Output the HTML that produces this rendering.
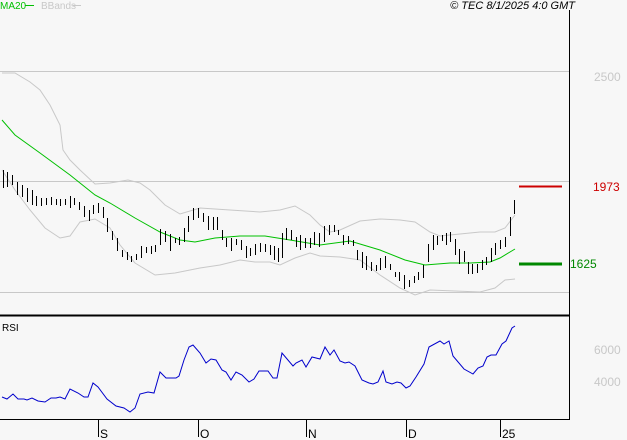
<!DOCTYPE html>
<html><head><meta charset="utf-8"><style>
html,body{margin:0;padding:0;background:#f7f7f7;}
body{width:627px;height:440px;overflow:hidden;position:relative;font-family:"Liberation Sans",sans-serif;}
svg{position:absolute;left:0;top:0;}
</style></head><body>
<svg width="627" height="440" viewBox="0 0 627 440" xmlns="http://www.w3.org/2000/svg" font-family="Liberation Sans, sans-serif">
<rect width="627" height="440" fill="#f7f7f7"/>
<text x="0" y="9" font-size="10" fill="#00c000">MA20</text>
<line x1="25" y1="5.5" x2="34" y2="5.5" stroke="#00c000" stroke-width="1"/>
<text x="41" y="9" font-size="10" fill="#c8c8c8">BBands</text>
<line x1="73" y1="5.5" x2="81" y2="5.5" stroke="#c8c8c8"/>
<text x="575" y="9" font-size="11" font-style="italic" fill="#000" text-anchor="end">© TEC 8/1/2025 4:0 GMT</text>
<g stroke="#c8c8c8" stroke-width="1">
<line x1="0" y1="71.5" x2="569" y2="71.5"/>
<line x1="0" y1="181.5" x2="569" y2="181.5"/>
<line x1="0" y1="292.5" x2="569" y2="292.5"/>
</g>
<text x="594" y="81" font-size="12" fill="#c8c8c8">2500</text>
<polyline fill="none" stroke="#c8c8c8" stroke-width="1" points="2,73 15,73 30,82 40,90 50,105 60,125 63,150 70,160 80,170 95,184 110,183 128,180 140,183 150,190 165,205 180,214 200,208 230,210 260,212 280,210 295,206 310,215 320,225 330,232 340,230 360,221 380,219 400,220 415,222 430,232 440,236 460,234 480,232 495,232 505,228 515,215"/>
<polyline fill="none" stroke="#c8c8c8" stroke-width="1" points="2,170 15,190 30,210 45,228 60,238 70,236 80,222 95,219 110,228 120,245 135,263 155,275 175,273 200,268 220,265 240,260 255,262 270,262 280,265 295,258 310,253 320,256 340,257 360,260 380,275 400,288 415,295 430,290 480,292 495,288 505,280 515,279"/>
<polyline fill="none" stroke="#00c000" stroke-width="1" points="2,120 15,135 40,153 70,175 95,195 110,203 135,218 160,232 180,240 195,242 215,238 240,236 265,236 290,240 320,245 350,241 380,250 405,260 425,265 450,263 470,263 490,262 500,258 515,249"/>
<g transform="translate(0.5,0)">
<path fill="none" stroke="#000" stroke-width="1" shape-rendering="crispEdges" d="
M3 170V188M7 172V187M12 175V185M17 182V195M22 185V197M27 188V202M32 190V205M36 196V206M41 198V206M46 198V205M51 197V205M56 199V205M60 199V206M65 199V205M70 196V208M74 198V205M79 202V210M84 206V217M89 210V221M93 205V214M98 203V213M103 207V218M107 218V232M112 231V240M117 238V251M122 250V257M127 252V260M131 256V262M136 254V260M141 246V258M146 247V253M151 246V254M155 245V252M160 229V245M165 231V242M170 234V251M175 238V243M179 237V245M184 228V242M188 216V232M193 208V220M198 208V218M203 213V222M208 216V230M213 217V230M217 217V230M222 230V240M226 238V247M231 238V251M236 239V245M241 240V250M246 246V258M250 248V256M255 244V255M260 243V252M265 244V252M270 245V255M274 246V260M278 248V262M282 233V258M286 228V240M291 230V240M296 237V247M300 235V250M305 238V248M310 238V248M314 232V245M319 233V247M324 226V242M329 225V235M334 225V232M338 230V235M343 235V245M348 236V244M353 240V246M357 250V260M362 252V268M366 256V270M371 262V271M376 265V271M380 258V270M385 256V268M390 264V270M395 272V277M399 272V281M404 275V289M409 280V287M414 276V283M418 272V280M423 265V278M428 244V262M433 235V250M437 236V245M442 235V241M446 233V245M450 232V242M455 239V255M459 249V264M464 251V262M468 262V274M472 264V274M477 264V273M482 260V270M486 257V265M491 248V262M495 243V255M500 240V249M505 237V247M510 217V236M514 200V214"/>
</g>
<line x1="519" y1="186.5" x2="562" y2="186.5" stroke="#cc0000" stroke-width="2"/>
<line x1="519" y1="264" x2="562" y2="264" stroke="#008800" stroke-width="3"/>
<text x="593" y="191" font-size="12" fill="#cc0000">1973</text>
<text x="570" y="268" font-size="12" fill="#008800">1625</text>
<line x1="569.5" y1="10" x2="569.5" y2="420" stroke="#000" stroke-width="1"/>
<line x1="0" y1="315.5" x2="569" y2="315.5" stroke="#000" stroke-width="2"/>
<line x1="0" y1="419.5" x2="569" y2="419.5" stroke="#000" stroke-width="1"/>
<text x="2" y="331" font-size="10" fill="#000">RSI</text>
<text x="594" y="354" font-size="12" fill="#c8c8c8">6000</text>
<text x="594" y="386" font-size="12" fill="#c8c8c8">4000</text>
<polyline fill="none" stroke="#0000cc" stroke-width="1" points="2,397 7,399 13,394 18,399 24,399 27,400 32,398 38,401 45,402 51,398 56,398 60,397 65,399 70,389 78,393 84,397 88,397 93,383 98,387 107,399 116,406 124,408 130,412 135,408 140,394 148,392 154,393 160,372 166,378 176,378 179,376 184,360 189,347 193,345 200,353 206,363 211,359 216,360 222,370 226,372 231,380 236,372 242,375 249,382 254,379 259,371 268,371 273,378 277,378 282,353 293,366 296,363 302,360 306,367 312,357 320,359 325,347 330,355 334,350 340,361 345,363 349,362 355,366 362,380 369,383 373,384 378,382 383,371 386,382 392,384 397,382 401,383 406,388 410,386 416,377 424,364 429,347 440,341 444,344 449,341 453,356 464,369 473,374 478,368 483,366 487,357 491,355 496,355 502,344 506,341 512,328 515,326"/>
<g stroke="#000" stroke-width="1">
<line x1="98.5" y1="419" x2="98.5" y2="437"/>
<line x1="198.5" y1="419" x2="198.5" y2="437"/>
<line x1="306.5" y1="419" x2="306.5" y2="437"/>
<line x1="406.5" y1="419" x2="406.5" y2="437"/>
<line x1="500.5" y1="419" x2="500.5" y2="437"/>
</g>
<g font-size="12" fill="#000">
<text x="100" y="438">S</text>
<text x="200" y="438">O</text>
<text x="308" y="438">N</text>
<text x="408" y="438">D</text>
<text x="502" y="438">25</text>
</g>
</svg>
</body></html>
